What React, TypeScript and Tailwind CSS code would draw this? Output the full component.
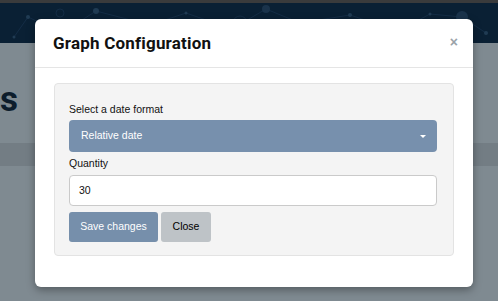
import React from "react";

const body = { fontFamily: '"Liberation Sans", Arial, sans-serif' };
const title = { fontFamily: 'Roboto, "Noto Sans", sans-serif' };

function NetworkPattern() {
  const nodes: [number, number, number][] = [
    [28, 14, 2], [62, 30, 1.5], [96, 8, 3], [150, 22, 5], [186, 10, 1.5], [232, 26, 2],
    [266, 6, 4], [300, 20, 1.5], [350, 12, 2], [398, 28, 2], [430, 11, 1.5], [462, 14, 6],
    [486, 30, 2], [122, 36, 1.5], [212, 36, 2], [322, 36, 1.5], [14, 34, 1.5],
  ];
  const links: [number, number][] = [
    [0, 1], [1, 2], [2, 3], [3, 4], [4, 5], [5, 6], [6, 7], [7, 8], [8, 9], [9, 10],
    [10, 11], [11, 12], [1, 13], [13, 3], [5, 14], [14, 7], [7, 15], [15, 9], [0, 16],
  ];
  return (
    <svg width="498" height="40" viewBox="0 0 498 40" className="absolute inset-0">
      {links.map(([a, b], i) => (
        <line
          key={i}
          x1={nodes[a][0]}
          y1={nodes[a][1]}
          x2={nodes[b][0]}
          y2={nodes[b][1]}
          stroke="#17304a"
          strokeWidth="0.8"
        />
      ))}
      {nodes.map(([x, y, r], i) => (
        <circle key={i} cx={x} cy={y} r={r} fill={r > 3 ? "#1a334b" : "#203b53"} />
      ))}
      <circle cx="240" cy="20" r="7" fill="none" stroke="#17304a" strokeWidth="0.8" />
      <circle cx="60" cy="10" r="4" fill="none" stroke="#17304a" strokeWidth="0.8" />
    </svg>
  );
}

export default function App() {
  return (
    <div className="relative w-[498px] h-[301px] overflow-hidden bg-[#7f8a91]" style={body}>
      {/* page behind the overlay */}
      <div className="h-[3px] bg-[#3a3b3c]" />
      <div className="relative h-[40px] bg-[#0a2034]">
        <NetworkPattern />
      </div>
      <div className="h-[100px] flex items-start">
        <span className="mt-[39px] text-[35px] font-bold leading-[36px] text-[#0d1d2c]" style={title}>
          s
        </span>
      </div>
      <div className="h-[23px] bg-[#737d84]" />

      {/* modal */}
      <div className="absolute left-[35px] top-[19px] w-[438px] h-[268px] bg-white rounded-[6px] shadow-[0_3px_9px_rgba(0,0,0,0.35)] flex flex-col">
        <div className="h-[49px] shrink-0 border-b border-[#e5e5e5] flex items-center justify-between pl-[18px] pr-[15px]">
          <h4 className="text-[17px] font-bold text-[#111] tracking-[0.2px] mt-[1px]" style={title}>
            Graph Configuration
          </h4>
          <span className="text-[14px] font-bold leading-none text-[#9aa2a9] mt-[-2px]">×</span>
        </div>
        <div className="pt-[15px] px-[19px]">
          <div className="bg-[#f4f4f4] border border-[#e3e3e3] rounded-[4px] pt-[18px] pb-[13px] pl-[14px] pr-[16px] text-[10.5px] text-[#111]">
            <label className="block leading-[15px] mb-[3px]">Select a date format</label>
            <div className="h-[32px] rounded-[4px] bg-[#7790ad] flex items-center justify-between pl-[12px] pr-[11px] text-white">
              <span>Relative date</span>
              <span className="w-0 h-0 border-l-[3px] border-r-[3px] border-t-[3px] border-l-transparent border-r-transparent border-t-white mt-[1px]" />
            </div>
            <label className="block leading-[15px] mt-[4px] mb-[4px]">Quantity</label>
            <div className="h-[31px] rounded-[4px] bg-white border border-[#cacaca] flex items-center pl-[9px]">
              30
            </div>
            <div className="flex gap-[3px] mt-[6px]">
              <button className="w-[89px] h-[30px] rounded-[3px] bg-[#768fab] text-white">Save changes</button>
              <button className="w-[50px] h-[30px] rounded-[3px] bg-[#bec3c7] text-black">Close</button>
            </div>
          </div>
        </div>
      </div>
    </div>
  );
}
